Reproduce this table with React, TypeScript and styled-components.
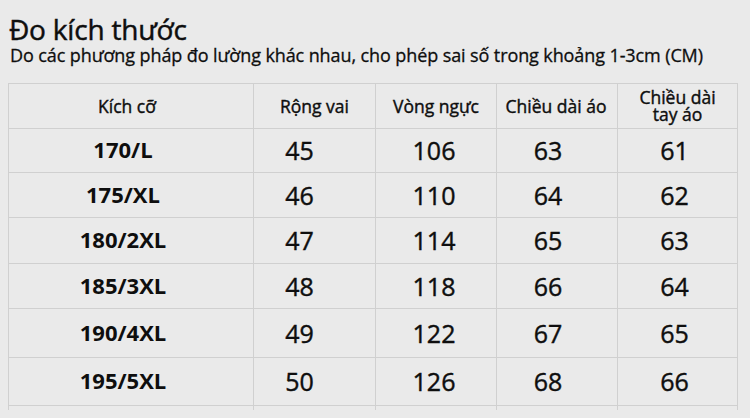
import React from "react";
import styled, { createGlobalStyle } from "styled-components";

const Global = createGlobalStyle`
  html, body { margin: 0; padding: 0; background: #eaeaea; }
  body { font-family: "Open Sans", "Noto Sans", sans-serif; color: #0e0e0e; }
`;

const Page = styled.div`
  width: 750px;
  height: 418px;
  box-sizing: border-box;
  padding: 15px 0 0 8px;
  background: #eaeaea;
  overflow: hidden;
`;

const Title = styled.h1`
  margin: 0 0 0 1px;
  font-size: 28px;
  font-weight: 400;
  line-height: 29.5px;
  letter-spacing: -0.2px;
  -webkit-text-stroke: 0.45px currentColor;
`;

const Subtitle = styled.p`
  margin: 0 0 0 2px;
  font-size: 18px;
  font-weight: 400;
  line-height: 20px;
  letter-spacing: -0.1px;
  -webkit-text-stroke: 0.3px currentColor;
`;

const TableWrap = styled.div`
  margin-top: 18.5px;
  height: 327px;
  width: 730px;
  overflow: hidden;
  box-sizing: border-box;
  border-top: 1px solid #d0d0d0;
  border-left: 1px solid #d0d0d0;
  display: grid;
  grid-template-columns: 245px 122px 121px 121px 120px;
  align-content: start;
`;

const Cell = styled.div<{ $h: number; $shift: number; $kind: "head" | "label" | "num" }>`
  height: ${(p) => p.$h}px;
  box-sizing: border-box;
  border-right: 1px solid #d0d0d0;
  border-bottom: 1px solid #d0d0d0;
  display: flex;
  align-items: center;
  justify-content: center;
  text-align: center;
  padding-right: ${(p) => Math.max(0, -p.$shift * 2)}px;
  padding-left: ${(p) => Math.max(0, p.$shift * 2)}px;
  padding-bottom: ${(p) => (p.$kind === "label" ? 3 : 0)}px;
  font-size: ${(p) => (p.$kind === "head" ? 17.5 : p.$kind === "label" ? 22 : 25)}px;
  font-weight: ${(p) => (p.$kind === "label" ? 700 : 400)};
  line-height: ${(p) => (p.$kind === "head" ? "17px" : "1")};
  -webkit-text-stroke: ${(p) => (p.$kind === "label" ? "0" : "0.4px")} currentColor;
`;

const headers = ["Kích cỡ", "Rộng vai", "Vòng ngực", "Chiều dài áo", "Chiều dài\ntay áo"];
const headShift = [-4, 0, 0, -1, 0];
const dataShift = [-8, -15, -2, -9, -3];

const rows = [
  { h: 44, v: ["170/L", "45", "106", "63", "61"] },
  { h: 45, v: ["175/XL", "46", "110", "64", "62"] },
  { h: 46, v: ["180/2XL", "47", "114", "65", "63"] },
  { h: 45, v: ["185/3XL", "48", "118", "66", "64"] },
  { h: 49, v: ["190/4XL", "49", "122", "67", "65"] },
  { h: 48, v: ["195/5XL", "50", "126", "68", "66"] },
  { h: 46, v: ["", "", "", "", ""] },
];

export default function App() {
  return (
    <>
      <Global />
      <Page>
        <Title>Đo kích thước</Title>
        <Subtitle>Do các phương pháp đo lường khác nhau, cho phép sai số trong khoảng 1-3cm (CM)</Subtitle>
        <TableWrap>
          {headers.map((t, i) => (
            <Cell key={"h" + i} $h={45} $shift={headShift[i]} $kind="head">
              <span style={{ whiteSpace: "pre-line" }}>{t}</span>
            </Cell>
          ))}
          {rows.map((r, ri) =>
            r.v.map((t, ci) => (
              <Cell key={ri + "-" + ci} $h={r.h} $shift={dataShift[ci]} $kind={ci === 0 ? "label" : "num"}>
                {t}
              </Cell>
            ))
          )}
        </TableWrap>
      </Page>
    </>
  );
}
